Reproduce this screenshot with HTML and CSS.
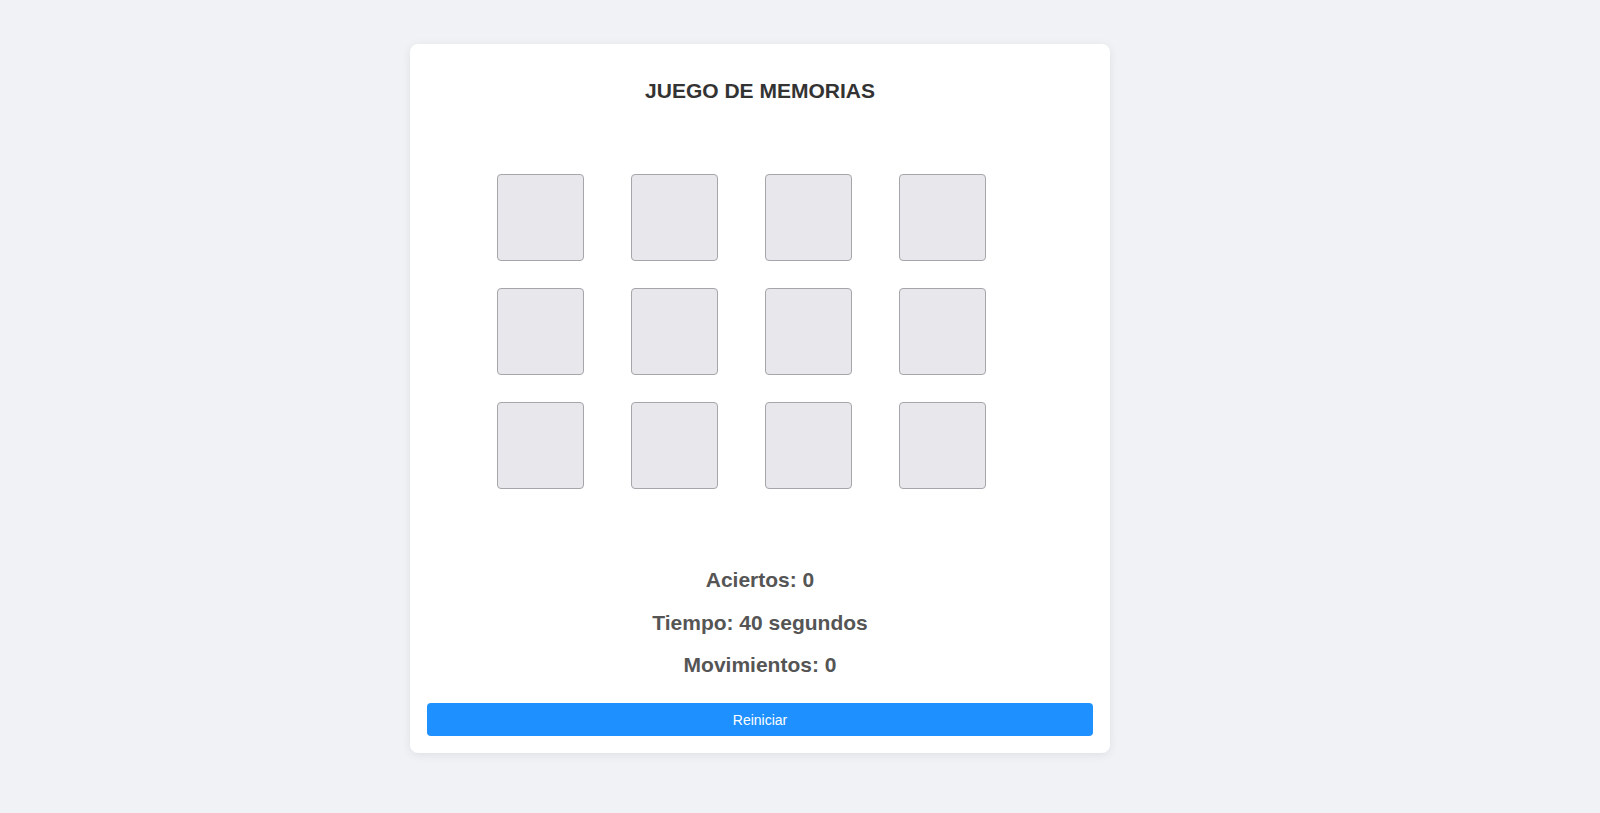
FILE: index.html
```html
<!DOCTYPE html>
<html lang="es">
<head>
<meta charset="utf-8">
<title>Juego de memorias</title>
<link rel="stylesheet" href="styles.css">
</head>
<body>
<main class="game">
  <h1 class="title">JUEGO DE MEMORIAS</h1>
  <div class="board">
    <div class="tile"></div><div class="tile"></div><div class="tile"></div><div class="tile"></div>
    <div class="tile"></div><div class="tile"></div><div class="tile"></div><div class="tile"></div>
    <div class="tile"></div><div class="tile"></div><div class="tile"></div><div class="tile"></div>
  </div>
  <div class="stats">
    <p class="stat">Aciertos: 0</p>
    <p class="stat">Tiempo: 40 segundos</p>
    <p class="stat">Movimientos: 0</p>
  </div>
  <button class="reset">Reiniciar</button>
</main>
</body>
</html>
```
FILE: styles.css
```css
* { box-sizing: border-box; }
html, body { margin: 0; padding: 0; }
body {
  background: #f0f2f5;
  font-family: "Liberation Sans", Arial, sans-serif;
  min-height: 813px;
  padding: 44px 80px 0 0;
}
.game {
  width: 700px;
  height: 709px;
  margin: 0 auto;
  background: #fff;
  border-radius: 8px;
  box-shadow: 0 2px 10px rgba(0, 0, 0, 0.08);
  padding: 17px;
  display: flex;
  flex-direction: column;
}
.title {
  margin: 18px 0 0;
  text-align: center;
  font-size: 21px;
  line-height: 24px;
  font-weight: bold;
  color: #333;
}
.board {
  margin-top: 71px;
  padding-left: 70px;
  display: grid;
  grid-template-columns: repeat(4, 87px);
  column-gap: 47px;
  row-gap: 27px;
}
.tile {
  width: 87px;
  height: 87px;
  background: #e8e8ec;
  border: 1px solid #a6a6aa;
  border-radius: 4px;
}
.stats {
  margin-top: 78px;
  display: flex;
  flex-direction: column;
  gap: 17.5px;
}
.stat {
  margin: 0;
  text-align: center;
  font-size: 21px;
  line-height: 25px;
  font-weight: bold;
  color: #555;
}
.reset {
  margin-top: 26px;
  height: 33px;
  width: 100%;
  flex: none;
  border: none;
  border-radius: 4px;
  background: #1e90ff;
  color: #fff;
  font-family: "Liberation Sans", Arial, sans-serif;
  font-size: 14px;
}
```
